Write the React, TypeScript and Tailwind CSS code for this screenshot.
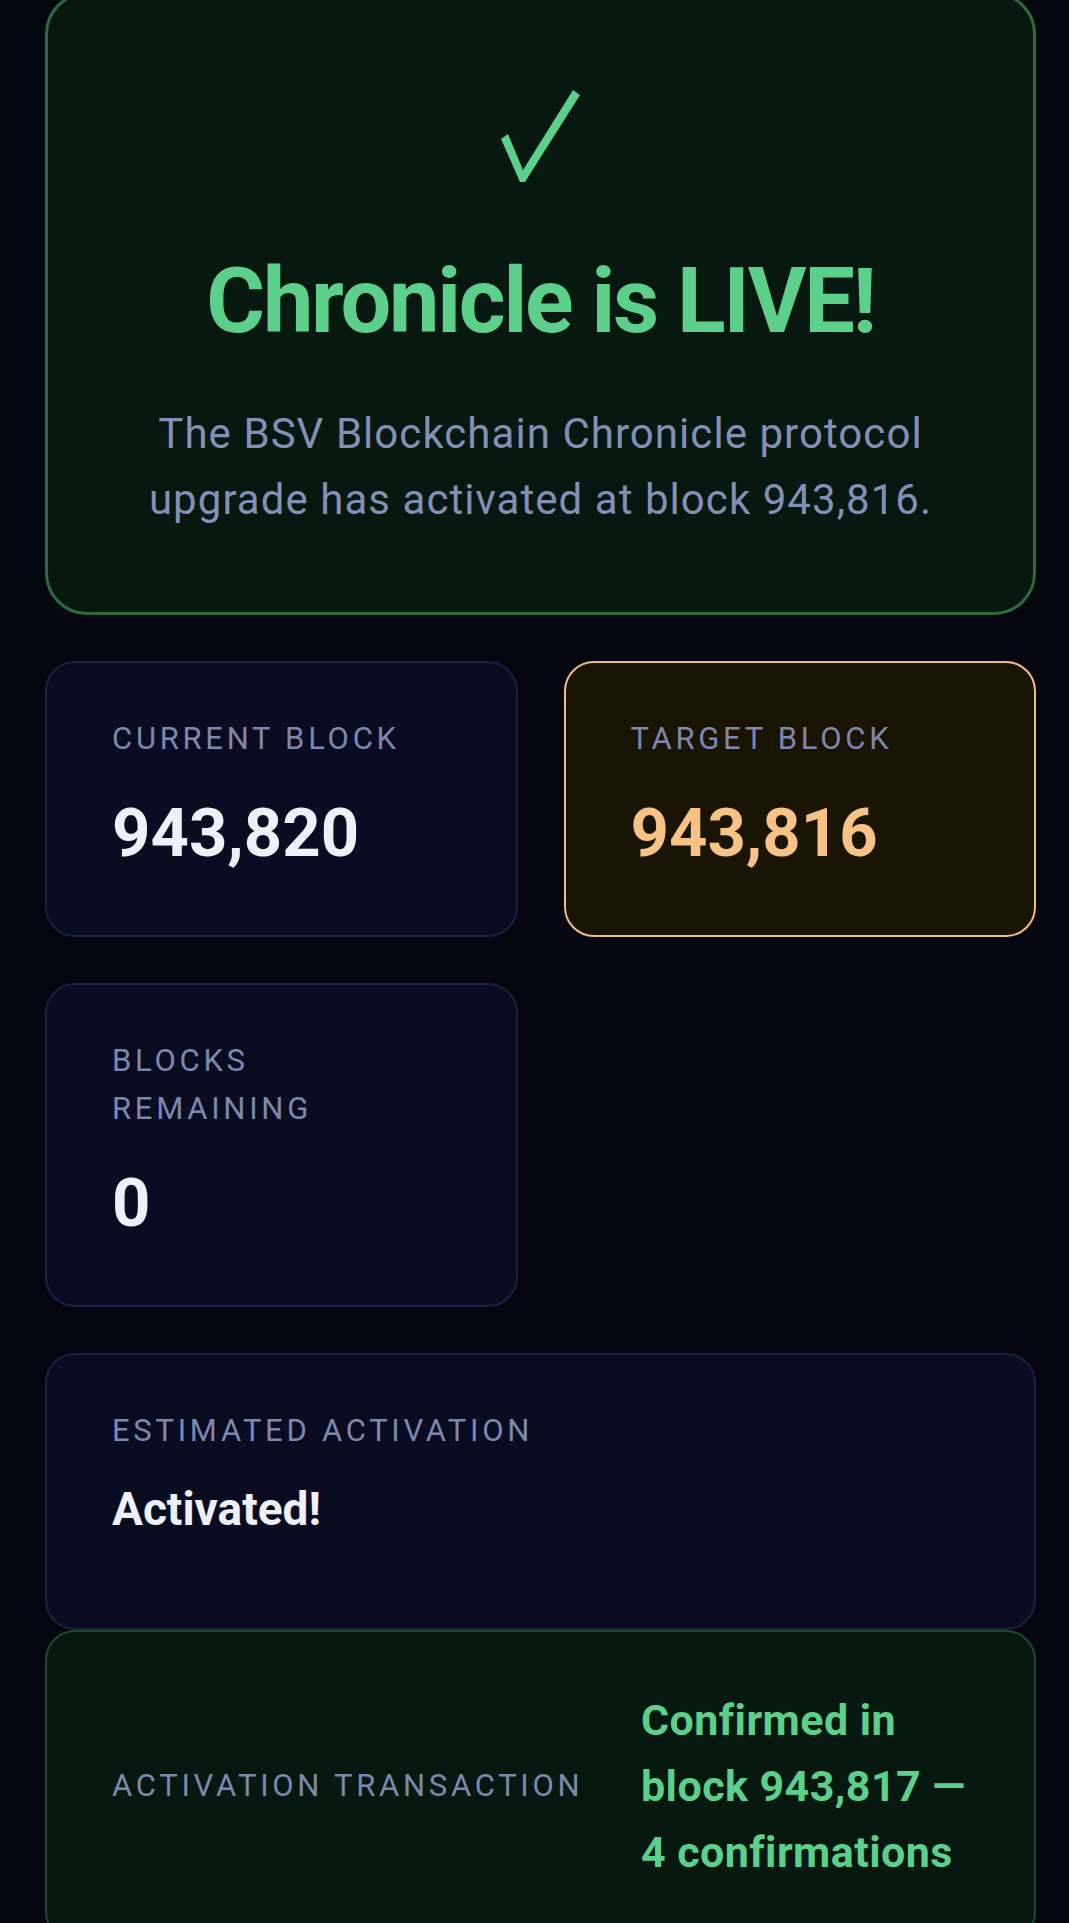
import React from "react";

const stats = [
  { label: "Current Block", value: "943,820", accent: false },
  { label: "Target Block", value: "943,816", accent: true },
  { label: "Blocks Remaining", value: "0", accent: false },
];

function CheckMark() {
  return (
    <svg width="80" height="92" viewBox="0 0 80 92" className="mx-auto block">
      <polygon
        points="0,49 7,44 22,80 72,0 79,5 24,92 19,92"
        fill="#5cd08a"
      />
    </svg>
  );
}

function StatCard({
  label,
  value,
  accent,
}: {
  label: string;
  value: string;
  accent: boolean;
}) {
  return (
    <div
      className={
        accent
          ? "rounded-[30px] border-2 border-[#f0bd85] bg-[#1a1405] px-[65px] pt-[52px] pb-[62px]"
          : "rounded-[30px] border-2 border-[#1b2046] bg-[#0a0c21] px-[65px] pt-[52px] pb-[62px]"
      }
    >
      <div className="text-[31px] leading-[48px] uppercase tracking-[0.12em] text-[#7e88ae]">
        {label}
      </div>
      <div
        className={
          accent
            ? "mt-[30px] text-[67px] leading-[80px] font-bold text-[#f6c285]"
            : "mt-[30px] text-[67px] leading-[80px] font-bold text-[#eef0f7]"
        }
      >
        {value}
      </div>
    </div>
  );
}

export default function App() {
  return (
    <div
      className="min-h-screen w-full overflow-hidden bg-[#05060f] pl-[45px] pr-[33px]"
      style={{ fontFamily: "Roboto, 'Noto Sans', sans-serif" }}
    >
      {/* Live banner */}
      <div className="-mt-[8px] rounded-[42px] border-[3px] border-[#2d6a3c] bg-[#06180f] px-[60px] pt-[95px] pb-[79px] text-center">
        <CheckMark />
        <h1 className="mt-[70px] text-[90px] leading-[99px] font-bold tracking-[-0.025em] text-[#5cd08a]">
          Chronicle is LIVE!
        </h1>
        <p className="mx-auto mt-[50px] max-w-[860px] text-[42px] leading-[66px] tracking-[0.025em] text-[#8490b8]">
          The BSV Blockchain Chronicle protocol upgrade has activated at block
          943,816.
        </p>
      </div>

      {/* Stats */}
      <div className="mt-[46px] grid grid-cols-2 gap-[46px]">
        {stats.map((s) => (
          <StatCard key={s.label} {...s} />
        ))}
      </div>

      <div className="mt-[46px] rounded-[30px] border-2 border-[#1b2046] bg-[#0a0c21] px-[65px] pt-[52px] pb-[89px]">
        <div className="text-[31px] leading-[48px] uppercase tracking-[0.12em] text-[#7e88ae]">
          Estimated Activation
        </div>
        <div className="mt-[24px] text-[46px] leading-[60px] font-bold text-[#eef0f7]">
          Activated!
        </div>
      </div>

      <div className="flex items-center justify-between rounded-[30px] border-2 border-[#1d4a2c] bg-[#06180f] px-[65px] py-[55px]">
        <div className="shrink-0 text-[31px] leading-[48px] uppercase tracking-[0.12em] text-[#7e88ae]">
          Activation Transaction
        </div>
        <div className="w-[328px] text-[43px] leading-[66px] font-bold tracking-[0.01em] text-[#5cd08a]">
          Confirmed in block 943,817 — 4 confirmations
        </div>
      </div>
    </div>
  );
}
